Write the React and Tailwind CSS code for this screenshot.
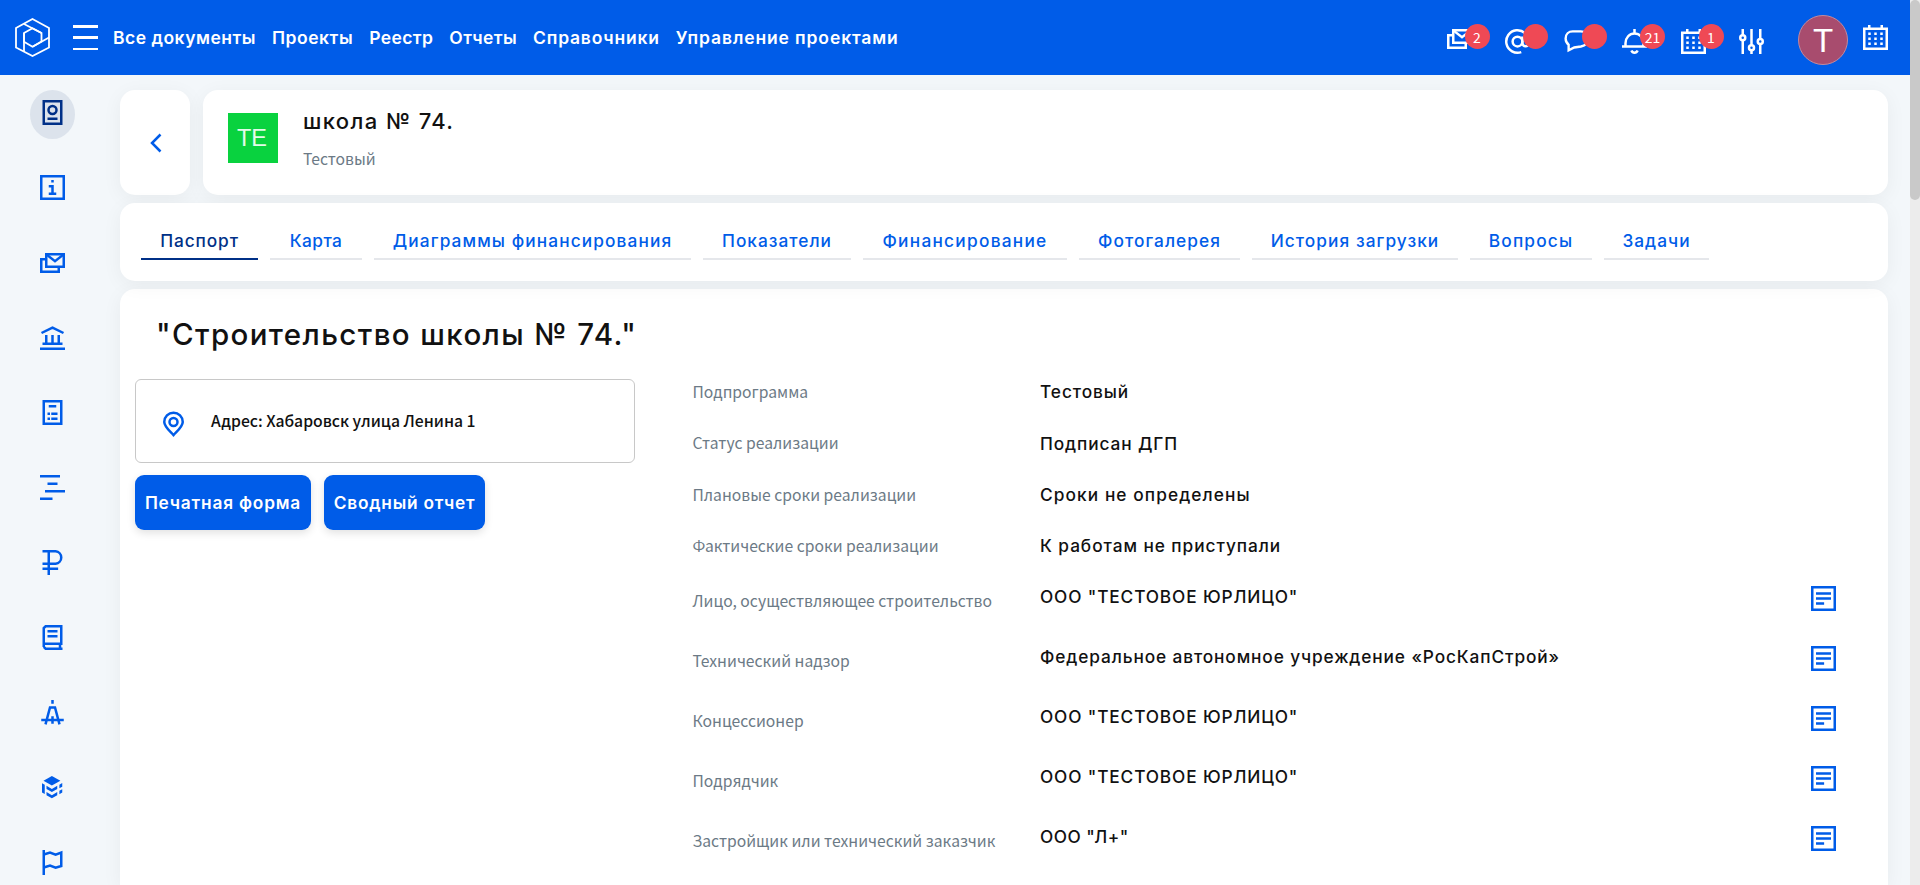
function Icon({ children, className = "" }) {
  return (
    <svg
      viewBox="0 0 20 20"
      className={`h-[25px] w-[25px] shrink-0 overflow-visible ${className}`}
      fill="none"
      stroke="currentColor"
      strokeWidth="2"
    >
      {children}
    </svg>
  );
}

const PassportIcon = () => (
  <Icon>
    <path d="M3 1h14v18H3zM6 15h8" />
    <circle cx="10" cy="8" r="3.2" />
  </Icon>
);
const InfoIcon = () => (
  <Icon>
    <path d="M1 1h18v18H1zM10 4v2M7 9h4M10 8v8M7 15h6" />
  </Icon>
);
const MailIcon = ({ shift = true }) => (
  <Icon>
    <g transform={shift ? "translate(0 .4)" : "translate(0 -2)"}>
      <path d="M5 3h14v10H5z" />
      <path d="M5.5 3.5l6.5 5 6.5-5" />
      <path d="M4 7H1v10h14v-3" />
    </g>
  </Icon>
);
const BankIcon = () => (
  <Icon>
    <path d="M1.2 6.4L10 2.1l8.8 4.3M5 8v6M10 8v6M15 8v6M2 15h16M0 19h20" />
  </Icon>
);
const ListIcon = () => (
  <Icon>
    <path d="M3 1h14v18H3zM7 5h6M6 11h2M9 11h5M6 15h2M9 15h5" />
  </Icon>
);
const GanttIcon = () => (
  <Icon>
    <path d="M0 1h16M6 7h8M4 13h16M0 19h10" />
  </Icon>
);
const RubleIcon = () => (
  <Icon>
    <path d="M2 1h10.500a5 5 0 0 1 4.500 5 5 5 0 0 1-4.500 5H2M7 0v20M2 15h12.500" />
  </Icon>
);
const BookIcon = () => (
  <Icon>
    <path d="M3 17.500V2.500L4.500 1H17v14H3M3 17.500L4.500 19H18M16 15v4M6 5h8M6 9h8" />
  </Icon>
);
const CompassIcon = () => (
  <Icon>
    <path d="M10 0v3M4.400 19.500L8 6h4l3.600 13.500M1 16h18M10 13v6" />
  </Icon>
);
const CubeIcon = () => (
  <Icon>
    <g fill="currentColor" stroke="none">
      <path d="M9.500 .8L16.300 4.500 9.500 8.400 2.800 4.500z" />
      <path d="M1.600 6.500L3.800 7.800v7.400L1.600 14z" />
      <path d="M5.200 8.600l4.300 2.500 4.300-2.500v2.500l-4.300 2.500L5.200 11.100z" />
      <path d="M5.200 13.600l4.300 2.500 4.300-2.500v2.500l-4.300 2.500L5.200 16.100z" />
      <path d="M15.500 7.700l2.300-1.300v2.900l-2.300 1.300zM15.500 12.600l2.300-1.300V14l-2.300 1.300z" />
    </g>
  </Icon>
);
const FlagIcon = () => (
  <Icon>
    <path d="M3 0v20M3 3.600L8 2.100l4.500 1.700L17 2v10.800l-4.500 1.400L8 12.500 3 14" />
  </Icon>
);
const AtIcon = () => (
  <Icon>
    <circle cx="10" cy="10" r="3.900" />
    <path d="M13.900 6v5.200a2.550 2.550 0 0 0 5.100 0V10a9 9 0 1 0-6 8.500" />
  </Icon>
);
const ChatIcon = () => (
  <Icon>
    <path
      strokeWidth="1.900"
      d="M3.700 17V12.600C2.100 11.300 1.300 9.600 1.300 7.600 1.300 4.200 3.700 1.900 7 1.900h6.500c3.300 0 5.600 2.400 5.600 5.800s-2.300 5.600-5.600 6.300l-5.300 .8z"
    />
  </Icon>
);
const BellIcon = () => (
  <Icon>
    <path d="M0 14h20M2.800 14v-2.700a7.200 7.800 0 0 1 14.400 0V14M10 0v3.500M7.500 17.200c.5 1.200 1.400 1.800 2.500 1.800s2-.6 2.500-1.800" />
  </Icon>
);
const CalendarIcon = () => (
  <Icon>
    <path d="M1 3h18v16H1zM5 0v3M15 0v3" />
    <path d="M4.200 7h2M9 7h2M13.800 7h2M4.200 11h2M9 11h2M13.800 11h2M4.200 15h2M9 15h2M13.800 15h2" />
  </Icon>
);
const SlidersIcon = () => (
  <Icon>
    <path d="M3 0v5M3 9v11M10 0v13M10 17v3M17 0v8M17 12v8" />
    <circle cx="3" cy="7" r="2" />
    <circle cx="10" cy="15" r="2" />
    <circle cx="17" cy="10" r="2" />
  </Icon>
);
const NoteIcon = () => (
  <Icon className="text-[#005ce8]">
    <path d="M1 1h18v18H1zM4 6h12M4 10h12M4 14h6.500" />
  </Icon>
);
const PinIcon = () => (
  <Icon className="text-[#005ce8]">
    <path d="M10 18.500C6 14.300 2.600 11.500 2.600 8a7.200 7.200 0 0 1 14.800 0c0 3.500-3.400 6.300-7.400 10.500z" />
    <circle cx="10" cy="8" r="3.200" />
  </Icon>
);

const nav = [
  ["Все документы", "tracking-[0.5px]"],
  ["Проекты", "tracking-[0.52px]"],
  ["Реестр", "tracking-[0.4px]"],
  ["Отчеты", "tracking-[0.42px]"],
  ["Справочники", "tracking-[0.78px]"],
  ["Управление проектами", "tracking-[0.88px]"],
];

const actions = [
  [() => <MailIcon shift={false} />, "2"],
  [AtIcon, ""],
  [ChatIcon, ""],
  [BellIcon, "21"],
  [CalendarIcon, "1"],
];

const side = [
  InfoIcon,
  MailIcon,
  BankIcon,
  ListIcon,
  GanttIcon,
  RubleIcon,
  BookIcon,
  CompassIcon,
  CubeIcon,
  FlagIcon,
];

const tabs = [
  ["Паспорт", "w-[117px] tracking-[0.9px]"],
  ["Карта", "w-[92px] tracking-[0.45px]"],
  ["Диаграммы финансирования", "w-[317px] tracking-[1.1px]"],
  ["Показатели", "w-[148px] tracking-[1px]"],
  ["Финансирование", "w-[204px] tracking-[1.26px]"],
  ["Фотогалерея", "w-[161px] tracking-[1.05px]"],
  ["История загрузки", "w-[206px] tracking-[1.05px]"],
  ["Вопросы", "w-[122px] tracking-[1.15px]"],
  ["Задачи", "w-[105px] tracking-[1px]"],
];

const facts = [
  ["Подпрограмма", "Тестовый", "tracking-[0.9px]"],
  ["Статус реализации", "Подписан ДГП", "tracking-[0.88px] pt-px"],
  ["Плановые сроки реализации", "Сроки не определены", "tracking-[1.08px]"],
  ["Фактические сроки реализации", "К работам не приступали", "tracking-[0.93px]"],
];

const companies = [
  ["Лицо, осуществляющее строительство", 'ООО "ТЕСТОВОЕ ЮРЛИЦО"', "tracking-[0.86px]"],
  ["Технический надзор", "Федеральное автономное учреждение «РосКапСтрой»", "tracking-[0.88px]"],
  ["Концессионер", 'ООО "ТЕСТОВОЕ ЮРЛИЦО"', "tracking-[0.86px]"],
  ["Подрядчик", 'ООО "ТЕСТОВОЕ ЮРЛИЦО"', "tracking-[0.86px]"],
  ["Застройщик или технический заказчик", 'ООО "Л+"', "tracking-[0.45px]"],
];

const card = "bg-white rounded-[15px] shadow-[0_4px_20px_rgba(0,0,0,0.05)]";
const label =
  "w-[347.5px] shrink-0 font-['Noto_Sans_CJK_SC',sans-serif] text-[15.7px] font-normal leading-6 text-[#6c7a86]";
const value = "text-[17.3px] font-medium leading-6 text-[#111]";

function Header() {
  return (
    <header className="flex h-[75px] shrink-0 bg-[#005ce8] text-white">
      <svg viewBox="0 0 35 39" className="mt-[18px] ml-[15px] h-[39px] w-[35px]" fill="none" stroke="white" strokeWidth="1.800">
        <path d="M17.500 1L34 10v19.500L17.500 38 1 29.500V10z" />
        <path d="M17.500 10.300L26.500 15v8.500l-9 5.200-8.500-5V15z" />
        <path d="M9 6l17.500 9M9 15v18.500M17.500 28.700L34 19.500" />
      </svg>
      <div className="mt-[25px] ml-[23px] flex h-[25px] w-[25px] flex-col justify-between">
        <i className="h-[2.500px] bg-white" />
        <i className="h-[2.500px] bg-white" />
        <i className="h-[2.500px] bg-white" />
      </div>
      <nav className="mt-[26px] ml-[15px] flex gap-4 text-[17.5px] font-semibold leading-6 whitespace-nowrap">
        {nav.map(([text, cls]) => (
          <span key={text} className={cls}>{text}</span>
        ))}
      </nav>
      <div className="mt-[29px] ml-auto flex h-[25px] gap-[33.5px]">
        {actions.map(([Glyph, count], i) => (
          <div key={i} className="relative h-[25px] w-[25px]">
            <Glyph />
            <span className="absolute -top-[5px] left-[18px] flex h-[25px] w-[25px] items-center justify-center rounded-full bg-[#ef4955] font-['Noto_Sans_CJK_SC',sans-serif] text-[14px] leading-none">
              {count}
            </span>
          </div>
        ))}
        <SlidersIcon />
      </div>
      <div className="mt-[15px] ml-[34px] flex h-[50px] w-[50px] items-center justify-center rounded-full border border-[#c08a9f] bg-[#a84c6e] font-['Liberation_Sans',sans-serif] text-[33px] leading-none">
        T
      </div>
      <div className="mt-[25px] mr-[22px] ml-[15px]">
        <CalendarIcon />
      </div>
    </header>
  );
}

function Sidebar() {
  return (
    <aside className="flex w-[120px] shrink-0 flex-col items-start text-[#005ce8]">
      <div className="mt-[15px] ml-[30px] flex h-[49px] w-[45px] justify-center rounded-[50%] bg-[#dce3ec] pt-[10px] text-[#003087]">
        <PassportIcon />
      </div>
      <div className="mt-9 ml-10 flex flex-col gap-[50px]">
        {side.map((Glyph, i) => (
          <Glyph key={i} />
        ))}
      </div>
    </aside>
  );
}

export default function App() {
  return (
    <div className="flex h-[885px] w-[1920px] overflow-hidden bg-[#f3f7fa] font-['Inter',sans-serif]">
      <div className="flex w-[1910px] flex-col">
        <Header />
        <div className="flex min-h-0 flex-1">
          <Sidebar />
          <main className="flex w-[1768px] flex-col gap-2 pt-[15px]">
            <div className="flex gap-[13px]">
              <div className={`${card} flex h-[105px] w-[70px] items-center justify-center pl-[2px]`}>
                <svg viewBox="0 0 12 20" className="h-5 w-3" fill="none" stroke="#005ce8" strokeWidth="2.500">
                  <path d="M10.500 1.500L2 10l8.500 8.500" />
                </svg>
              </div>
              <div className={`${card} flex h-[105px] flex-1 pt-[23px] pl-[25px]`}>
                <div className="flex h-[50px] w-[50px] items-center justify-center bg-[#09d23f] pt-px pr-[2px] font-['Liberation_Sans',sans-serif] text-[23.5px] leading-none text-[#e3fbe9]">
                  TE
                </div>
                <div className="-mt-[6px] ml-[25px]">
                  <div className="text-[22px] font-medium leading-[28px] tracking-[1.38px] text-[#111]">школа № 74.</div>
                  <div className="mt-[12px] font-['Noto_Sans_CJK_SC',sans-serif] text-[15.7px] leading-6 text-[#6c7a86]">
                    Тестовый
                  </div>
                </div>
              </div>
            </div>
            <div className={`${card} z-10 flex h-[78px] shrink-0 gap-3 pt-[19px] pl-[21px]`}>
              {tabs.map(([text, cls], i) => (
                <div
                  key={text}
                  className={`${cls} flex h-[38px] justify-center border-b-2 pt-[7px] text-[17.3px] font-medium leading-6 whitespace-nowrap ${
                    i === 0 ? "border-[#003087] text-[#003087]" : "border-[#e5e7eb] text-[#005ce8]"
                  }`}
                >
                  {text}
                </div>
              ))}
            </div>
            <section className={`${card} flex-1 rounded-b-none pt-[25px]`}>
              <h1 className="pl-[36px] text-[29.5px] font-medium leading-[40px] tracking-[1.38px] text-[#111]">
                "Строительство школы № 74."
              </h1>
              <div className="mt-[25px] flex pl-[15px]">
                <div className="w-[500px] shrink-0">
                  <div className="flex h-[84px] rounded-md border border-[#c8c8c8] pt-[32px] pl-[25px]">
                    <PinIcon />
                    <span className="-mt-[3px] ml-[25px] font-['Noto_Sans_CJK_SC',sans-serif] text-[15.75px] font-medium leading-6 text-[#111]">
                      Адрес: Хабаровск улица Ленина 1
                    </span>
                  </div>
                  <div className="mt-3 flex gap-[13px] text-[17.3px] font-semibold leading-6 text-white">
                    <div className="flex h-[55px] w-[176px] items-center justify-center rounded-[9px] bg-[#005ce8] tracking-[0.8px] whitespace-nowrap shadow-[0_3px_8px_rgba(0,0,0,0.12)]">
                      Печатная форма
                    </div>
                    <div className="flex h-[55px] w-[161px] items-center justify-center rounded-[9px] bg-[#005ce8] tracking-[0.78px] whitespace-nowrap shadow-[0_3px_8px_rgba(0,0,0,0.12)]">
                      Сводный отчет
                    </div>
                  </div>
                </div>
                <div className="mt-px ml-[57.5px] flex-1">
                  {facts.map(([name, text, cls]) => (
                    <div key={name} className="flex h-[51.25px]">
                      <span className={label}>{name}</span>
                      <span className={`${value} ${cls}`}>{text}</span>
                    </div>
                  ))}
                  {companies.map(([name, text, cls]) => (
                    <div key={name} className="flex h-[60px]">
                      <span className={`${label} pt-1`}>{name}</span>
                      <span className={`${value} ${cls} flex-1`}>{text}</span>
                      <span className="mt-px mr-[52px]">
                        <NoteIcon />
                      </span>
                    </div>
                  ))}
                </div>
              </div>
            </section>
          </main>
        </div>
      </div>
      <div className="w-[10px] bg-[#ececec]">
        <div className="h-[200px] rounded-[5px] bg-[#c9c9c9]" />
      </div>
    </div>
  );
}
